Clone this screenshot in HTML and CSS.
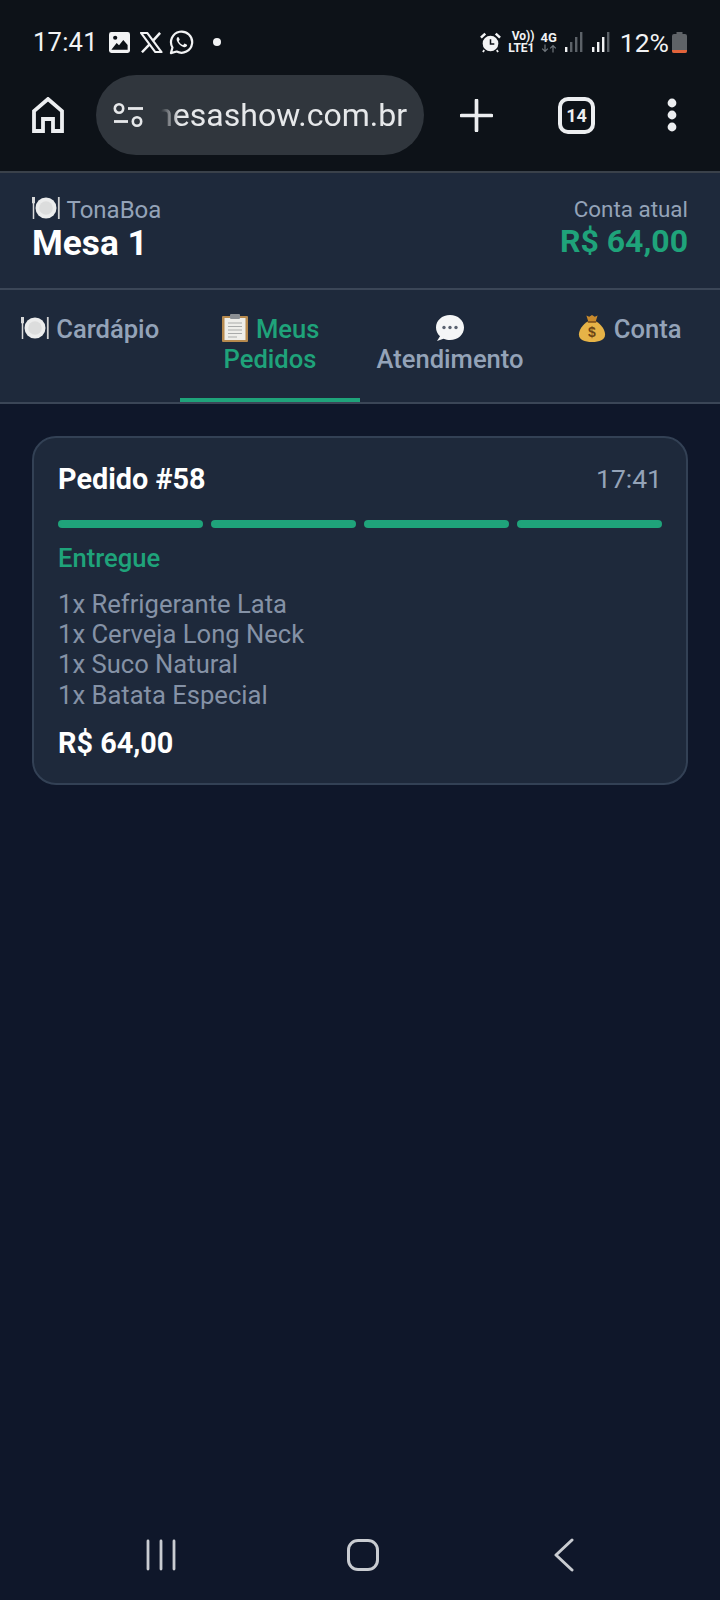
FILE: index.html
```html
<!DOCTYPE html>
<html lang="pt-BR">
<head>
<meta charset="utf-8">
<title>Mesa 1</title>
<link rel="stylesheet" href="styles.css">
</head>
<body>
<div class="phone">
  <div class="chrome">
    <div class="status">
      <div class="status-left">
        <span class="clock">17:41</span>
        <svg class="ic-gallery" viewBox="0 0 22 22"><rect x="0" y="0" width="22" height="22" rx="2.5" fill="#f2f3f4"/><path d="M2.5 18.5 L8 11.5 L10.5 14 L15 8.5 L19.5 13.5 V18.5 Z" fill="#0c1117"/><circle cx="6.5" cy="6" r="2.2" fill="#0c1117"/></svg>
        <svg class="ic-x" viewBox="0 0 24 22"><path d="M1 1h6.5l15 20H16Z" fill="none" stroke="#f2f3f4" stroke-width="2.2" stroke-linejoin="round"/><path d="M21 1 13.2 9.6M10.2 12.6 2 21.2" stroke="#f2f3f4" stroke-width="2.6" fill="none"/></svg>
        <svg class="ic-wa" viewBox="0 0 26 26"><path d="M2 24l1.6-5.8A11 11 0 1 1 8 22.4Z" fill="none" stroke="#f2f3f4" stroke-width="2.3" stroke-linejoin="round"/><path d="M9.2 7.4c-1 .6-1.7 2-1 3.8 1.2 3 3.6 5.4 6.8 6.6 1.8.6 3.2-.2 3.7-1.3.2-.6.2-1 0-1.2l-2.5-1.2c-.4-.1-.7.8-1.3 1.4-.3.2-.6.1-1-.1-1.5-.7-2.8-2-3.6-3.5-.2-.4 0-.6.3-.9.5-.5.7-.9.5-1.3L9.9 7.6c-.2-.3-.4-.3-.7-.2Z" fill="#f2f3f4"/></svg>
        <span class="dot"></span>
      </div>
      <div class="status-right">
        <svg class="ic-alarm" viewBox="0 0 22 22"><circle cx="11" cy="12" r="8.2" fill="#f2f3f4"/><path d="M11 7.5V12.5H15" fill="none" stroke="#0c1117" stroke-width="1.6"/><path d="M1 6 5.5 1.6M21 6 16.5 1.6" stroke="#f2f3f4" stroke-width="2.6"/><path d="M4.500 19 3 21M17.500 19 19 21" stroke="#f2f3f4" stroke-width="1.8"/></svg>
        <div class="volte"><span>Vo))</span><span>LTE1</span></div>
        <div class="net"><span>4G</span><svg class="net-arrows" viewBox="0 0 16 8"><path d="M4 0V7M1.200 4.200 4 7 6.800 4.200" fill="none" stroke="#70767c" stroke-width="1.2"/><path d="M12 8V1M9.200 3.800 12 1 14.800 3.800" fill="none" stroke="#70767c" stroke-width="1.2"/></svg></div>
        <svg class="ic-signal" viewBox="0 0 18 20"><rect x="0" y="15" width="2.4" height="5" fill="#f2f3f4"/><rect x="5" y="10" width="2.4" height="10" fill="#5c6268"/><rect x="10" y="5" width="2.4" height="15" fill="#5c6268"/><rect x="15" y="0" width="2.4" height="20" fill="#5c6268"/></svg>
        <svg class="ic-signal" viewBox="0 0 18 20"><rect x="0" y="15" width="2.4" height="5" fill="#f2f3f4"/><rect x="5" y="10" width="2.4" height="10" fill="#f2f3f4"/><rect x="10" y="5" width="2.4" height="15" fill="#f2f3f4"/><rect x="15" y="0" width="2.4" height="20" fill="#5c6268"/></svg>
        <span class="pct">12%</span>
        <svg class="ic-batt" viewBox="0 0 15 21"><path d="M4.500 0h6v2h2.500a2 2 0 0 1 2 2v15a2 2 0 0 1-2 2H2a2 2 0 0 1-2-2V4a2 2 0 0 1 2-2h2.500Z" fill="#5f6367"/><path d="M0 18h15v1a2 2 0 0 1-2 2H2a2 2 0 0 1-2-2Z" fill="#e2633a"/></svg>
      </div>
    </div>
    <div class="toolbar">
      <svg class="ic-home" viewBox="0 0 32 36"><path d="M2 34V14L16 2 30 14V34H21V22H11V34Z" fill="none" stroke="#eceef0" stroke-width="3.8"/></svg>
      <div class="pill">
        <svg class="ic-tune" viewBox="0 0 32 26"><circle cx="6" cy="6" r="4.2" fill="none" stroke="#e6e8ea" stroke-width="2.6"/><path d="M15 6H30" stroke="#e6e8ea" stroke-width="2.8"/><circle cx="24" cy="19" r="4.2" fill="none" stroke="#e6e8ea" stroke-width="2.6"/><path d="M1 19H15" stroke="#e6e8ea" stroke-width="2.8"/></svg>
        <div class="url"><span>mesashow.com.br</span></div>
      </div>
      <svg class="ic-plus" viewBox="0 0 34 34"><path d="M17 1.500V32.500M1.500 17H32.500" stroke="#eceef0" stroke-width="3.8" stroke-linecap="round"/></svg>
      <div class="tabs-count">14</div>
      <svg class="ic-more" viewBox="0 0 10 34"><circle cx="5" cy="5" r="4.4" fill="#eceef0"/><circle cx="5" cy="17" r="4.4" fill="#eceef0"/><circle cx="5" cy="29" r="4.4" fill="#eceef0"/></svg>
    </div>
  </div>

  <header class="head">
    <div>
      <div class="brand"><svg class="emoji" viewBox="0 0 28 24"><use href="#plate"/></svg> TonaBoa</div>
      <div class="mesa">Mesa 1</div>
    </div>
    <div class="bill">
      <div class="bill-label">Conta atual</div>
      <div class="bill-value">R$ 64,00</div>
    </div>
  </header>

  <nav class="tabs">
    <div class="tab"><span><svg class="emoji" viewBox="0 0 28 24"><use href="#plate"/></svg> Cardápio</span></div>
    <div class="tab active"><span><svg class="emoji" viewBox="0 0 28 28"><rect x="1" y="2" width="26" height="26" rx="1" fill="#b78a4e"/><rect x="3.500" y="4" width="21" height="22" fill="#eeeeea"/><rect x="9" y="0" width="10" height="5" rx="1" fill="#8b8f94"/><path d="M7 9H21M7 12.500H21M7 16H21M7 19.500H21M7 23H16" stroke="#a9abaa" stroke-width="1.2"/></svg> Meus Pedidos</span></div>
    <div class="tab"><span><svg class="emoji" viewBox="0 0 28 26"><path d="M14 0C6 0 0 5.500 0 12.500c0 3.500 1.500 6.500 4 8.800L1 26l6.500-2.200c2 .9 4.200 1.300 6.500 1.300 8 0 14-5.600 14-12.600S22 0 14 0Z" fill="#f5f6f7"/><circle cx="8" cy="12.500" r="1.700" fill="#5a6270"/><circle cx="14" cy="12.500" r="1.700" fill="#5a6270"/><circle cx="20" cy="12.500" r="1.700" fill="#5a6270"/></svg> Atendimento</span></div>
    <div class="tab"><span><svg class="emoji" viewBox="0 0 28 30"><path d="M8 1.500 11 3 14 1 17 3 20 1.500 18 8H10Z" fill="#c98a2c"/><path d="M10.500 7.500C4 11 0 17 0 22c0 6 6 8 14 8s14-2 14-8c0-5-4-11-10.500-14.500Z" fill="#e6b347"/><path d="M9.500 7.500H18.500V9.500H9.500Z" fill="#8b5a1e"/><text x="14" y="25" text-anchor="middle" class="bag-sign">$</text></svg> Conta</span></div>
  </nav>

  <main class="content">
    <article class="card">
      <div class="card-top">
        <div class="order">Pedido #58</div>
        <div class="time">17:41</div>
      </div>
      <div class="progress"><i></i><i></i><i></i><i></i></div>
      <div class="state">Entregue</div>
      <ul class="items">
        <li>1x Refrigerante Lata</li>
        <li>1x Cerveja Long Neck</li>
        <li>1x Suco Natural</li>
        <li>1x Batata Especial</li>
      </ul>
      <div class="total">R$ 64,00</div>
    </article>
  </main>

  <div class="navbar">
    <svg class="ic-recents" viewBox="0 0 30 32"><path d="M2 2V30M15 2V30M28 2V30" stroke="#c9ccd1" stroke-width="2.8" stroke-linecap="round"/></svg>
    <div class="ic-homebtn"></div>
    <svg class="ic-back" viewBox="0 0 20 34"><path d="M18 2 2 17 18 32" fill="none" stroke="#c9ccd1" stroke-width="3" stroke-linecap="round" stroke-linejoin="round"/></svg>
  </div>
</div>

<svg class="defs" width="0" height="0">
  <defs>
    <g id="plate">
      <circle cx="14" cy="12" r="10.500" fill="#eceded"/>
      <circle cx="14" cy="12" r="6.800" fill="#dcdddd"/>
      <path d="M1.500 1V23" stroke="#d8d9da" stroke-width="1.500"/>
      <path d="M0.500 1V7H2.500V1" fill="none" stroke="#d8d9da" stroke-width="1"/>
      <path d="M26.800 1V23" stroke="#d0d1d2" stroke-width="1.800"/>
    </g>
  </defs>
</svg>
</body>
</html>
```
FILE: styles.css
```css
* { box-sizing: border-box; }
html, body { margin: 0; padding: 0; background: #0f172a; }
body { font-family: Roboto, "Noto Sans", sans-serif; }
.phone { width: 720px; height: 1600px; display: flex; flex-direction: column; background: #0f172a; }

.chrome { height: 173px; background: #0d1218; border-bottom: 2px solid #3a414a; flex: none; }
.status { height: 72px; padding: 12px 33px 0 33px; display: flex; justify-content: space-between; align-items: center; color: #f2f3f4; }
.status-left, .status-right { display: flex; align-items: center; }
.clock { font-size: 25.600px; letter-spacing: .2px; margin-right: 11px; }
.ic-gallery { width: 21px; height: 21px; margin-right: 10px; }
.ic-x { width: 23px; height: 21px; margin-right: 6px; }
.ic-wa { width: 25px; height: 25px; margin-right: 19px; }
.dot { width: 8px; height: 8px; border-radius: 50%; background: #f2f3f4; }
.ic-alarm { width: 21px; height: 21px; margin-right: 7px; }
.volte { display: flex; flex-direction: column; font-size: 12px; font-weight: 700; line-height: 12px; text-align: right; margin-right: 6px; }
.net { display: flex; flex-direction: column; align-items: center; font-size: 13px; font-weight: 700; line-height: 12px; margin-right: 8px; }
.net-arrows { width: 16px; height: 9px; }
.ic-signal { width: 18px; height: 20px; margin-right: 9px; }
.ic-signal + .pct { margin-left: 1px; }
.pct { font-size: 26.500px; margin-right: 3px; }
.ic-batt { width: 15px; height: 21px; }

.toolbar { height: 98px; display: flex; align-items: center; padding-left: 32px; padding-bottom: 12px; }
.ic-home { width: 32px; height: 36px; margin-right: 32px; }
.pill { width: 328px; height: 80px; border-radius: 40px; background: #30363d; display: flex; align-items: center; padding: 0 17px 0 17px; margin-right: 36px; }
.ic-tune { width: 32px; height: 27px; flex: none; margin-right: 16px; }
.url { flex: 1; overflow: hidden; display: flex; justify-content: flex-end; font-size: 32px; color: #e6e8ea; white-space: nowrap; -webkit-mask-image: linear-gradient(90deg, transparent 0, #000 18px); mask-image: linear-gradient(90deg, transparent 0, #000 18px); }
.ic-plus { width: 33px; height: 33px; margin-right: 65px; }
.tabs-count { width: 37px; height: 37px; border: 4px solid #eceef0; border-radius: 10px; font-size: 18px; font-weight: 700; color: #eceef0; display: flex; align-items: center; justify-content: center; margin-right: 72px; }
.ic-more { width: 10px; height: 34px; }

.head { height: 117px; flex: none; background: #1e293b; border-bottom: 2px solid #3b4657; padding: 21px 32px 0; display: flex; justify-content: space-between; }
.brand { font-size: 24px; line-height: 26px; color: #94a3b8; }
.mesa { font-size: 35.200px; line-height: 40px; font-weight: 700; color: #fff; }
.bill { text-align: right; margin-top: 4px; }
.bill-label { font-size: 22.400px; line-height: 22px; color: #94a3b8; }
.bill-value { font-size: 32px; line-height: 42px; font-weight: 700; color: #1fa37a; }

.tabs { height: 114px; flex: none; display: flex; background: #1e293b; border-bottom: 2px solid #3b4657; }
.tab { width: 180px; padding: 24px 10px 0; text-align: center; font-size: 25.600px; line-height: 30px; font-weight: 500; color: #94a3b8; }
.tab.active { color: #1fa37a; box-shadow: inset 0 -4px 0 #1fa37a; }
.emoji { display: inline-block; width: 28px; height: 28px; vertical-align: -4px; margin-right: 1px; }
.bag-sign { font: 700 15px "Liberation Sans", sans-serif; fill: #6b4415; }
.defs { position: absolute; }

.content { flex: 1; padding: 32px 32px 0; }
.card { height: 349px; background: #1e293b; border: 2px solid #334155; border-radius: 24px; padding: 24px 24px 0; }
.card-top { display: flex; justify-content: space-between; align-items: center; }
.order { font-size: 28.800px; line-height: 34px; font-weight: 700; color: #fff; }
.time { font-size: 26.500px; line-height: 34px; color: #94a3b8; }
.progress { display: flex; gap: 8px; margin-top: 24px; }
.progress i { flex: 1; height: 8px; border-radius: 4px; background: #1fa37a; }
.state { font-size: 25.600px; line-height: 30px; font-weight: 500; color: #1fa37a; margin-top: 15px; }
.items { list-style: none; margin: 16px 0 0; padding: 0; font-size: 25.600px; line-height: 30.200px; color: #8592a6; }
.total { font-size: 28.800px; line-height: 34px; font-weight: 700; color: #fff; margin-top: 16px; }

.navbar { height: 90px; flex: none; display: flex; justify-content: space-between; align-items: center; padding: 0 146px; }
.ic-recents { width: 30px; height: 32px; }
.ic-homebtn { width: 32px; height: 32px; border: 3px solid #c9ccd1; border-radius: 11px; margin-right: 4px; }
.ic-back { width: 20px; height: 34px; }
```
